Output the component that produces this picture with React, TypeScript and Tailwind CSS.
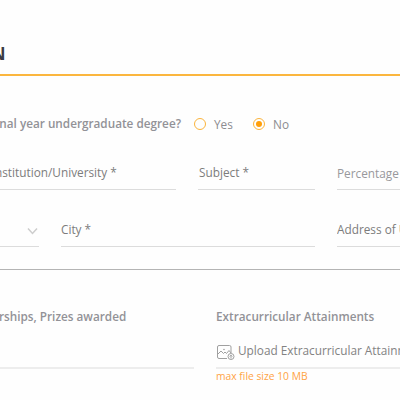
import React from 'react';

interface FieldProps {
  label: string;
  className: string;
  textClass?: string;
  children?: React.ReactNode;
}

function Field({ label, className, textClass = 'text-[#7c7c7c]', children }: FieldProps) {
  return (
    <div className={`h-9 shrink-0 border-b border-[#dcdcdc] flex whitespace-nowrap text-[11.8px] leading-[37px] ${className}`}>
      <span className={textClass}>{label}</span>
      {children}
    </div>
  );
}

function Radio({ label, checked = false }: { label: string; checked?: boolean }) {
  return (
    <label className="flex items-center">
      <span className="w-3 h-3 shrink-0 rounded-full border border-[#fbb43c] flex items-center justify-center">
        {checked && <span className="w-1.5 h-1.5 rounded-full bg-[#ff9f0a]" />}
      </span>
      <span className="ml-2 pt-px text-[11.8px] text-[#8c8c90]">{label}</span>
    </label>
  );
}

function UploadIcon() {
  return (
    <svg width="18" height="17" viewBox="0 0 18 17" className="shrink-0" fill="none" stroke="#a0a0a0" strokeWidth="1">
      <path d="M10 13.5H2A1.5 1.5 0 01.5 12V2A1.5 1.5 0 012 .5h10.5A1.5 1.5 0 0114 2v6" />
      <path d="M.5 9.5L4 6l2.5 2.500L8 7l1.500 1.500L12 5.500l2 2.500" />
      <circle cx="7" cy="4.5" r="0.4" />
      <circle cx="14" cy="11.5" r="3" />
      <path d="M14 13.5V10M12.700 11.500l1.300-1.300 1.300 1.300" />
    </svg>
  );
}

export default function App() {
  return (
    <div className="w-[400px] h-[400px] overflow-hidden bg-[#fefefe] font-['Open_Sans',sans-serif]">
      {/* Section title */}
      <div className="h-[76px] border-b-2 border-[#fbb63e] pt-[41px] flex">
        <h2 className="-ml-[9px] text-[18px] leading-6 font-bold text-[#3c3c44]">N</h2>
      </div>

      {/* Final year question */}
      <div className="h-4 mt-10 flex items-center whitespace-nowrap">
        <div className="w-[181px] mr-[13px] flex justify-end text-[11.75px] font-semibold text-[#929297]">
          nal year undergraduate degree?
        </div>
        <div className="w-[59px]">
          <Radio label="Yes" />
        </div>
        <Radio label="No" checked />
      </div>

      {/* Education fields */}
      <div className="mt-[22px] flex">
        <Field label="nstitution/University *" className="w-44 mr-[22px] -indent-[5px]" />
        <Field label="Subject *" className="w-[117px] mr-[22px] pl-px" />
        <Field label="Percentage" className="w-[63px] pt-px" textClass="text-[#98989c]" />
      </div>
      <div className="mt-[21px] flex">
        <Field label="" className="w-[39px] mr-[22px] justify-end items-center">
          <svg width="11" height="8" viewBox="0 0 11 8" fill="none" stroke="#cdcdcd" strokeWidth="1.5" className="mr-px mt-1">
            <path d="M1 1.5l4.5 5 4.5-5" />
          </svg>
        </Field>
        <Field label="City *" className="w-[254px] mr-[22px]" />
        <Field label="Address of U" className="w-[63px] overflow-hidden" />
      </div>

      <div className="mt-[22px] h-px bg-[#b4b4b4]" />

      {/* Awards and uploads */}
      <div className="mt-[38px] flex whitespace-nowrap">
        <div className="w-[194px] mr-[22px]">
          <h3 className="h-4 leading-4 -ml-px text-[11.75px] font-semibold text-[#929297]">rships, Prizes awarded</h3>
          <div className="h-[45px] border-b-2 border-[#ededed]" />
        </div>
        <div className="w-[184px] overflow-hidden">
          <h3 className="h-4 leading-4 text-[11.75px] font-semibold text-[#929297]">Extracurricular Attainments</h3>
          <div className="h-[45px] pt-[21px] pl-px border-b-2 border-[#ededed] flex text-[#828282]">
            <UploadIcon />
            <span className="ml-[3px] -mt-[5px] text-[11.8px] leading-5">Upload Extracurricular Attainm</span>
          </div>
          <p className="text-[10.3px] leading-[15px] text-[#ffa345]">max file size 10 MB</p>
        </div>
      </div>
    </div>
  );
}
